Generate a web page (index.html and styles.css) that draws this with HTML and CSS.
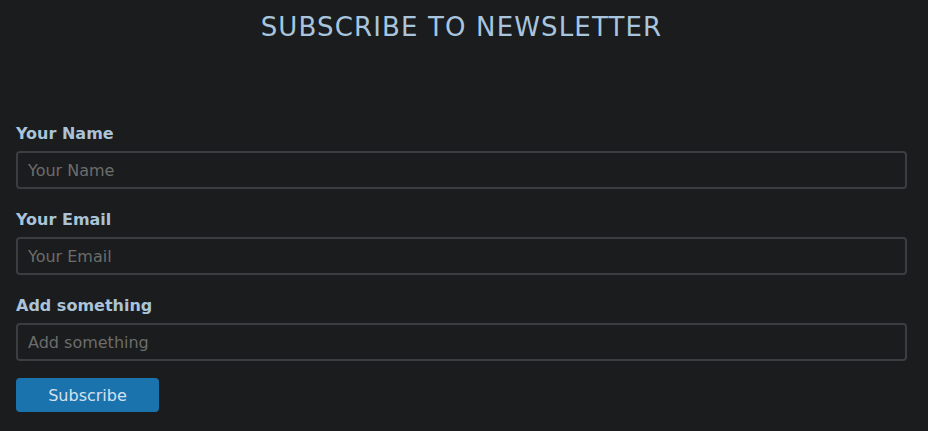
FILE: index.html
```html
<!DOCTYPE html>
<html>
<head>
<meta charset="utf-8">
<link rel="stylesheet" href="styles.css">
</head>
<body>
<div class="page">
  <h1 class="title">SUBSCRIBE TO NEWSLETTER</h1>
  <form class="form">
    <div class="field">
      <label class="label">Your Name</label>
      <input class="input" type="text" placeholder="Your Name">
    </div>
    <div class="field">
      <label class="label">Your Email</label>
      <input class="input" type="text" placeholder="Your Email">
    </div>
    <div class="field field-last">
      <label class="label">Add something</label>
      <input class="input" type="text" placeholder="Add something">
    </div>
    <button class="btn" type="button">Subscribe</button>
  </form>
</div>
</body>
</html>
```
FILE: styles.css
```css
html, body {
  margin: 0;
  padding: 0;
  background: #1a1c1d;
}
body {
  font-family: "DejaVu Sans", sans-serif;
}
.page {
  padding: 0 21px 0 16px;
}
.title {
  margin: 11px 0 0 0;
  text-align: center;
  font-weight: 400;
  font-size: 26px;
  line-height: 32px;
  letter-spacing: 1.15px;
  color: #a9c5de;
}
.form {
  margin-top: 80px;
  display: flex;
  flex-direction: column;
}
.field {
  display: flex;
  flex-direction: column;
  margin-bottom: 20px;
}
.field-last {
  margin-bottom: 17px;
}
.label {
  font-weight: 700;
  font-size: 16px;
  line-height: 20px;
  padding-top: 1px;
  color: #aac3d8;
  margin-bottom: 7px;
}
.input {
  box-sizing: border-box;
  height: 38px;
  width: 100%;
  background: #1a1c1d;
  border: 2px solid #3b3e41;
  border-radius: 4px;
  padding: 0 10px;
  font-family: "DejaVu Sans", sans-serif;
  font-size: 16px;
  color: #cccccc;
  outline: none;
}
.input::placeholder {
  color: #6c6d6c;
}
.btn {
  align-self: flex-start;
  width: 143px;
  height: 34px;
  background: #1b73ae;
  border: none;
  border-radius: 4px;
  color: #d4e2ee;
  font-family: "DejaVu Sans", sans-serif;
  font-size: 16px;
  cursor: pointer;
}
```
